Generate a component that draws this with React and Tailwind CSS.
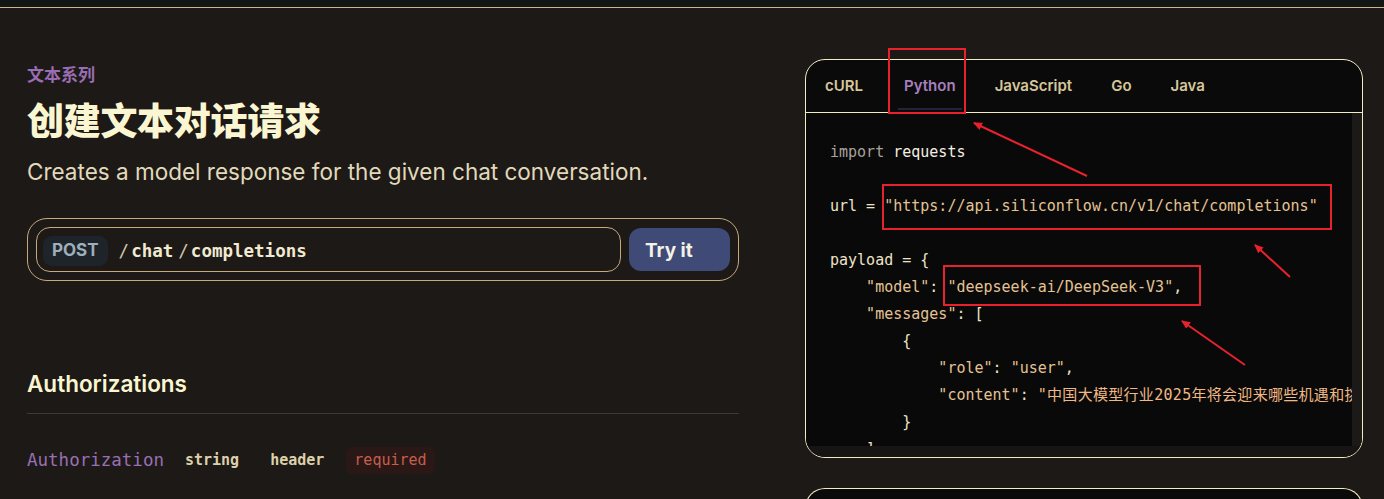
import React from "react";

const mono = "font-['DejaVu_Sans_Mono','Noto_Sans_CJK_SC',monospace]";
const sans = "font-['Inter','Noto_Sans_CJK_SC',sans-serif]";

function S({ c, children }) {
  return <span className={c}>{children}</span>;
}

const str = "text-[#e3c394]";
const pl = "text-[#ece4c8]";

const lines = [
  [<S key="a" c="text-[#a6a39c]">import </S>, <S key="b" c="text-[#f4efe2]">requests</S>],
  [],
  [<S key="a" c={pl}>url = </S>, <S key="b" c={str}>"https://api.siliconflow.cn/v1/chat/completions"</S>],
  [],
  [<S key="a" c={pl}>payload = {"{"}</S>],
  [<S key="a" c={str}>    "model"</S>, <S key="b" c={pl}>: </S>, <S key="c" c={str}>"deepseek-ai/DeepSeek-V3"</S>, <S key="d" c={pl}>,</S>],
  [<S key="a" c={str}>    "messages"</S>, <S key="b" c={pl}>: [</S>],
  [<S key="a" c={pl}>        {"{"}</S>],
  [<S key="a" c={str}>            "role"</S>, <S key="b" c={pl}>: </S>, <S key="c" c={str}>"user"</S>, <S key="d" c={pl}>,</S>],
  [<S key="a" c={str}>            "content"</S>, <S key="b" c={pl}>: </S>, <S key="c" c="text-[#efb985] tracking-[0.3px]">"中国大模型行业2025年将会迎来哪些机遇和挑战？"</S>],
  [<S key="a" c={pl}>        {"}"}</S>],
  [<S key="a" c={pl}>    ]</S>],
];

export default function App() {
  return (
    <div className={`relative min-h-screen bg-[#1c1917] ${sans} overflow-hidden`}>
      <div className="h-[7px] bg-[#121614]" />
      <div className="h-px bg-[#cfb587]" />

      <div className="flex items-start gap-[66px] pl-[27px]">
        {/* Left column */}
        <div className="w-[712px] pt-[56px]">
          <div className="text-[17px] leading-[22px] font-bold text-[#9a6db3]">文本系列</div>
          <h1 className="mt-[14px] text-[37px] leading-[44px] font-extrabold text-[#fbf6d2] tracking-[-0.3px]">
            创建文本对话请求
          </h1>
          <p className="mt-[13px] text-[22.5px] leading-[30px] text-[#e2d9bb]">
            Creates a model response for the given chat conversation.
          </p>

          <div className="mt-[31px] flex h-[63px] items-center gap-[8px] rounded-[20px] border border-[#c7aa7c] pl-[8px] pr-[8px]">
            <div className="flex h-[45px] flex-1 items-center rounded-[14px] border border-[#c7aa7c] pl-[6px] pt-[3px]">
              <div className="flex h-[30px] items-center rounded-[9px] bg-[#1e2429] px-[9px] text-[17px] font-bold text-[#9eafbc]">
                POST
              </div>
              <div className={`ml-[11px] flex items-center text-[17.5px] font-bold text-[#f1ead0] ${mono}`}>
                <span className="font-normal text-[#cfc6aa]">/</span>
                <span className="ml-[2px]">chat</span>
                <span className="ml-[5px] font-normal text-[#cfc6aa]">/</span>
                <span className="ml-[2px]">completions</span>
              </div>
            </div>
            <div className="flex h-[43px] w-[101px] items-center rounded-[12px] bg-[#3f4a76] pl-[16px] pt-[3px] text-[19px] font-bold text-[#f4f1e6]">
              Try it
            </div>
          </div>

          <h2 className="mt-[88px] text-[22.5px] leading-[30px] font-semibold text-[#fbf6d2]">Authorizations</h2>
          <div className="mt-[14px] h-px bg-[#3b3936]" />
          <div className={`mt-[33px] flex items-center ${mono}`}>
            <span className="text-[17.5px] leading-[24px] text-[#9a6fb4]">Authorization</span>
            <span className="ml-[21px] text-[15px] font-bold text-[#ddd0aa]">string</span>
            <span className="ml-[31px] text-[15px] font-bold text-[#ddd0aa]">header</span>
            <span className="ml-[22px] rounded-[6px] bg-[#2a1816] px-[8px] py-[2px] text-[15px] text-[#c55f4d]">required</span>
          </div>
        </div>

        {/* Right column */}
        <div className="w-[558px] pt-[51px]">
          <div className="flex h-[399px] flex-col overflow-hidden rounded-[20px] border border-[#f2ecc2] bg-[#0b0a0a]">
            <div className="flex h-[53px] shrink-0 items-center border-b border-[#f2ecc2] pl-[19px] pt-[1px] text-[15px] font-semibold text-[#d6c79a]">
              <span>cURL</span>
              <span className="relative ml-[41px] text-[#a67fbf]">
                Python
                <span className="absolute left-[-6px] right-[-6px] top-[33px] h-[2px] bg-[#25223d]" />
              </span>
              <span className="ml-[39px]">JavaScript</span>
              <span className="ml-[39px]">Go</span>
              <span className="ml-[39px]">Java</span>
            </div>
            <div className="flex min-h-0 flex-1">
              <div className={`min-w-0 flex-1 overflow-hidden bg-[#0a0909] pl-[24px] pt-[26px] text-[15px] leading-[27px] ${mono}`}>
                {lines.map((l, i) => (
                  <div key={i} className="h-[27px] whitespace-pre">
                    {l.length ? l : " "}
                  </div>
                ))}
              </div>
              <div className="w-[10px] shrink-0 bg-[#1b1a19]" />
            </div>
            <div className="h-[11px] shrink-0 bg-[#161514]" />
          </div>

          <div className="mt-[30px] h-[60px] rounded-t-[20px] border border-b-0 border-[#f2ecc2] bg-[#0b0a0a]" />
        </div>
      </div>

      {/* Red annotation overlays */}
      <div className="pointer-events-none absolute left-[888px] top-[48px] h-[66px] w-[78px] border-2 border-[#e8222c]" />
      <div className="pointer-events-none absolute left-[882px] top-[184px] h-[46px] w-[450px] border-2 border-[#e8222c]" />
      <div className="pointer-events-none absolute left-[943px] top-[265px] h-[41px] w-[258px] border-2 border-[#e8222c]" />
      <svg className="pointer-events-none absolute left-0 top-0" width="1384" height="499">
        <defs>
          <marker id="ah" markerWidth="10" markerHeight="10" refX="8" refY="5" orient="auto" markerUnits="userSpaceOnUse">
            <path d="M0,1 L9,5 L0,9 Z" fill="#e8222c" />
          </marker>
        </defs>
        <line x1="1087" y1="176" x2="974" y2="123" stroke="#e8222c" strokeWidth="2" markerEnd="url(#ah)" />
        <line x1="1290" y1="277" x2="1255" y2="245" stroke="#e8222c" strokeWidth="2" markerEnd="url(#ah)" />
        <line x1="1245" y1="365" x2="1182" y2="321" stroke="#e8222c" strokeWidth="2" markerEnd="url(#ah)" />
      </svg>
    </div>
  );
}
